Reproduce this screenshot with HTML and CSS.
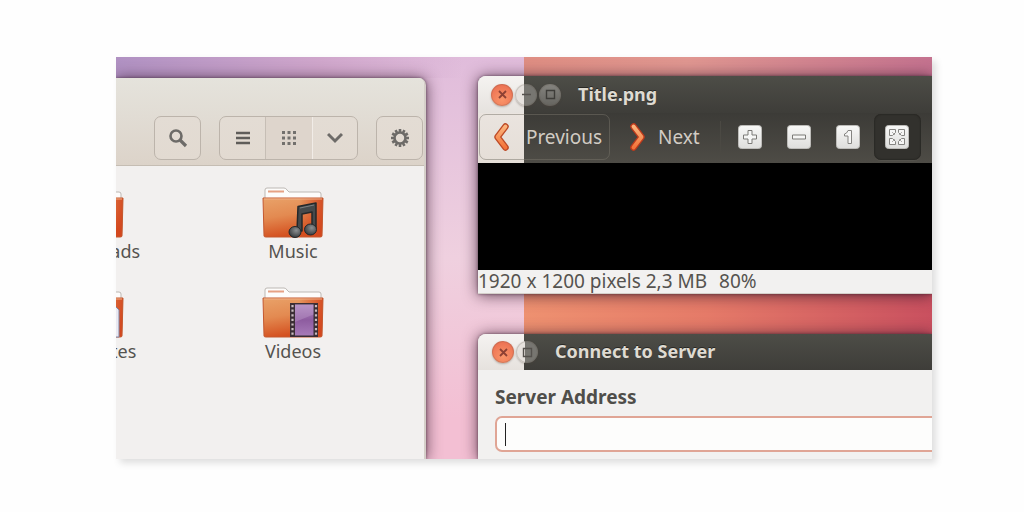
FILE: index.html
```html
<!DOCTYPE html>
<html lang="en">
<head>
<meta charset="utf-8">
<title>Desktop themes</title>
<link rel="stylesheet" href="styles.css">
</head>
<body>
<svg class="defs" width="0" height="0" aria-hidden="true">
  <defs>
    <linearGradient id="folder" x1="0" y1="0" x2=".25" y2="1">
      <stop offset="0" stop-color="#e9a269"/><stop offset=".5" stop-color="#e38a51"/><stop offset="1" stop-color="#d4501f"/>
    </linearGradient>
    <linearGradient id="edge" x1="0" x2="1">
      <stop offset=".6" stop-color="#d3451d" stop-opacity="0"/><stop offset="1" stop-color="#d3451d" stop-opacity=".9"/>
    </linearGradient>
    <linearGradient id="arrow" x1="0" y1="0" x2="0" y2="1">
      <stop offset="0" stop-color="#fbb47c"/><stop offset="1" stop-color="#f4743a"/>
    </linearGradient>
    <linearGradient id="tile" x1="0" y1="0" x2="0" y2="1">
      <stop offset="0" stop-color="#f8f8f7"/><stop offset="1" stop-color="#dededc"/>
    </linearGradient>
    <linearGradient id="film" x1="0" y1="0" x2="0" y2="1">
      <stop offset="0" stop-color="#b08ac0"/><stop offset=".5" stop-color="#8e5ca0"/><stop offset="1" stop-color="#a67ab8"/>
    </linearGradient>
    <radialGradient id="ball" cx=".6" cy=".35" r=".7">
      <stop offset="0" stop-color="#8d9092"/><stop offset="1" stop-color="#33373a"/>
    </radialGradient>
    <symbol id="folder-base" viewBox="0 0 62 52">
      <path d="M3 12V3q0-2 2-2h17q2 0 3 2l2 2h30q2 0 2 2v6z" fill="#fdfcfb" stroke="#bdb8b4"/>
      <path d="M6 4.500h16" stroke="#e6a184" stroke-width="2"/>
      <path d="M1 11h60l-1 38q0 1-2 1H4q-2 0-2-1z" fill="url(#folder)"/>
      <path d="M1 11h60l-1 38q0 1-2 1H4q-2 0-2-1z" fill="url(#edge)" stroke="#c4582f"/>
      <path d="M2 12h58" stroke="#efb08a"/>
    </symbol>
  </defs>
</svg>

<main class="desktop">
  <section class="window files" aria-label="Files">
    <header class="files-header">
      <button class="tool" aria-label="Search">
        <svg width="20" height="20" viewBox="0 0 20 20"><circle cx="8" cy="8" r="5.5" fill="none" stroke="#6d6b68" stroke-width="2.6"/><path d="M12 12l6 6" stroke="#6d6b68" stroke-width="3.2"/></svg>
      </button>
      <div class="views">
        <button aria-label="List view">
          <svg width="14" height="14" viewBox="0 0 14 14"><path d="M0 2h14M0 7h14M0 12h14" stroke="#5f5d5a" stroke-width="2.6"/></svg>
        </button>
        <button class="on" aria-label="Icon view">
          <svg width="14" height="14" viewBox="0 0 14 14" fill="#72706d"><path d="M0 0h3v3H0zM5.500 0h3v3h-3zM11 0h3v3h-3zM0 5.500h3v3H0zM5.500 5.500h3v3h-3zM11 5.500h3v3h-3zM0 11h3v3H0zM5.500 11h3v3h-3zM11 11h3v3h-3z"/></svg>
        </button>
        <button aria-label="View options">
          <svg width="16" height="12" viewBox="0 0 16 12"><path d="M1 2l7 7 7-7" fill="none" stroke="#6d6b68" stroke-width="3"/></svg>
        </button>
      </div>
      <button class="tool" aria-label="Settings">
        <svg width="20" height="20" viewBox="-10 -10 20 20" stroke="#6d6b68" fill="none"><circle r="5.500" stroke-width="2.600"/><path stroke-width="2.600" d="M0-9v3M0 9V6M9 0H6M-9 0h3M4.500-7.800L3-5.200M7.800-4.500L5.200-3M7.800 4.500L5.200 3M4.500 7.800L3 5.200M-4.500 7.800L-3 5.200M-7.800 4.500L-5.200 3M-7.800-4.500L-5.200-3M-4.500-7.800L-3-5.200"/></svg>
      </button>
    </header>
    <div class="icons">
      <figure class="item">
        <svg width="62" height="52" viewBox="0 0 62 52"><use href="#folder-base"/></svg>
        <figcaption>Downloads</figcaption>
      </figure>
      <figure class="item">
        <svg width="62" height="52" viewBox="0 0 62 52"><use href="#folder-base"/>
          <path d="M36 19.500L54 16v25h-4V25l-10 2v17h-5z" fill="#45494b" stroke="#25282a" stroke-width="1.500" stroke-linejoin="round"/>
          <path d="M38 21l14-3" stroke="#7d8082"/>
          <ellipse cx="33" cy="45" rx="6" ry="5.500" fill="url(#ball)" stroke="#25282a"/>
          <ellipse cx="48.500" cy="42.500" rx="6" ry="5.500" fill="url(#ball)" stroke="#25282a"/>
        </svg>
        <figcaption>Music</figcaption>
      </figure>
      <figure class="item">
        <svg width="62" height="52" viewBox="0 0 62 52"><use href="#folder-base"/><path d="M32 18h20l5 5v27H32z" fill="#e9e9f2" stroke="#8086a6"/></svg>
        <figcaption>Templates</figcaption>
      </figure>
      <figure class="item">
        <svg width="62" height="52" viewBox="0 0 62 52"><use href="#folder-base"/>
          <path d="M28 16h28v34H28z" fill="#3b2e35"/>
          <path d="M33 17.500h18.500v31H33z" fill="url(#film)"/>
          <path d="M33 17.500h18.500v10L33 35z" fill="#c6a6d0" opacity=".35"/>
          <path d="M30.500 18v32M54 18v32" stroke="#c9bcc0" stroke-width="2.200" stroke-dasharray="2.200 2.400"/>
        </svg>
        <figcaption>Videos</figcaption>
      </figure>
    </div>
  </section>

  <div class="stack">
    <section class="window viewer" aria-label="Title.png">
      <header class="titlebar">
        <div class="controls">
          <button class="ctl close" aria-label="Close"><svg width="9" height="9" viewBox="0 0 9 9"><path d="M1 1l7 7M8 1L1 8" stroke="#8e4033" stroke-width="1.800"/></svg></button>
          <button class="ctl split" aria-label="Minimize"><svg width="9" height="9" viewBox="0 0 9 9"><path d="M0 4.500h9" stroke="#55524e" stroke-width="1.500"/></svg></button>
          <button class="ctl dark" aria-label="Maximize"><svg width="11" height="11" viewBox="0 0 11 11"><path d="M1.500 1.500h8v8h-8z" fill="none" stroke="#3e3d39" stroke-width="1.400"/></svg></button>
        </div>
        <h1 class="title">Title.png</h1>
      </header>
      <div class="toolbar">
        <button class="nav raised"><svg width="17" height="28" viewBox="0 0 17 28"><path d="M12.500 3.500L4.500 14l8 10.500" fill="none" stroke="#bd4a26" stroke-width="6.500" stroke-linecap="round" stroke-linejoin="round"/><path d="M12.500 3.500L4.500 14l8 10.500" fill="none" stroke="url(#arrow)" stroke-width="3.800" stroke-linecap="round" stroke-linejoin="round"/></svg>Previous</button>
        <button class="nav next"><svg width="17" height="28" viewBox="0 0 17 28"><path d="M4.500 3.500l8 10.500-8 10.500" fill="none" stroke="#bd3a1c" stroke-width="6.500" stroke-linecap="round" stroke-linejoin="round"/><path d="M4.500 3.500l8 10.500-8 10.500" fill="none" stroke="url(#arrow)" stroke-width="3.800" stroke-linecap="round" stroke-linejoin="round"/></svg>Next</button>
        <span class="rule"></span>
        <button class="zoom" aria-label="Zoom in"><svg width="24" height="24" viewBox="0 0 24 24"><rect x=".5" y=".5" width="23" height="23" rx="3" fill="url(#tile)" stroke="#bdbcb9"/><path d="M10 5.500h4V10h4.500v4H14v4.500h-4V14H5.500v-4H10z" fill="#f6f6f5" stroke="#7b7a77"/></svg></button>
        <button class="zoom" aria-label="Zoom out"><svg width="24" height="24" viewBox="0 0 24 24"><rect x=".5" y=".5" width="23" height="23" rx="3" fill="url(#tile)" stroke="#bdbcb9"/><path d="M5.500 10h13v4h-13z" fill="#f6f6f5" stroke="#7b7a77"/></svg></button>
        <button class="zoom" aria-label="Normal size"><svg width="24" height="24" viewBox="0 0 24 24"><rect x=".5" y=".5" width="23" height="23" rx="3" fill="url(#tile)" stroke="#bdbcb9"/><path d="M12 5.500h3.500v13H12V11H8.500V9q2.500-.5 3.500-3.500z" fill="#f6f6f5" stroke="#858481"/></svg></button>
        <button class="zoom on" aria-label="Best fit"><svg width="24" height="24" viewBox="0 0 24 24"><rect x=".5" y=".5" width="23" height="23" rx="3" fill="url(#tile)" stroke="#bdbcb9"/><path d="M4.500 4.500h6v3l-3 3h-3zM19.500 4.500h-6v3l3 3h3zM4.500 19.500h6v-3l-3-3h-3zM19.500 19.500h-6v-3l3-3h3z" fill="#f6f6f5" stroke="#858481"/><path d="M7 7l3 3M17 7l-3 3M7 17l3-3M17 17l-3-3" stroke="#b0afac"/></svg></button>
      </div>
      <div class="canvas"></div>
      <footer class="status"><span>1920 x 1200 pixels 2,3 MB</span><span>80%</span></footer>
    </section>

    <section class="window connect" aria-label="Connect to Server">
      <header class="titlebar short">
        <div class="controls">
          <button class="ctl close" aria-label="Close"><svg width="9" height="9" viewBox="0 0 9 9"><path d="M1 1l7 7M8 1L1 8" stroke="#8e4033" stroke-width="1.800"/></svg></button>
          <button class="ctl split" aria-label="Maximize"><svg width="11" height="11" viewBox="0 0 11 11"><path d="M1.500 1.500h8v8h-8z" fill="none" stroke="#55524e" stroke-width="1.400"/></svg></button>
        </div>
        <h2 class="title">Connect to Server</h2>
      </header>
      <form class="form">
        <label for="address">Server Address</label>
        <input id="address" type="text">
      </form>
    </section>
  </div>
</main>
</body>
</html>
```
FILE: styles.css
```css
* { box-sizing: border-box; }

body {
  margin: 0;
  padding: 57px 92px 53px 116px;
  background: #fefefe;
  color: #55534f;
  font: 18px/24px "Noto Sans", "Open Sans", sans-serif;
}

.defs { display: block; height: 0; }

button {
  display: flex;
  align-items: center;
  justify-content: center;
  margin: 0;
  padding: 0;
  border: 0;
  background: none;
  color: inherit;
  font: inherit;
}

svg { display: block; flex: none; }

.desktop {
  display: grid;
  grid-template-columns: 310px minmax(0, 1fr);
  column-gap: 52px;
  height: 402px;
  overflow: hidden;
  background:
    linear-gradient(90deg, #df8e83, #e09791 40%, #c4728f) 100% 0 / 50% 60px no-repeat,
    linear-gradient(90deg, #ee9170, #e57a68 45%, #c9505f) 100% 100% / 50% 100% no-repeat,
    linear-gradient(90deg, #b091c2, #cfa6cb 50%, rgba(223, 187, 219, 0) 85%) 0 0 / 50% 21px no-repeat,
    linear-gradient(#e0bcdb, #efd0df 50%, #f3bfd3 90%);
  box-shadow: 4px 4px 7px rgba(0, 0, 0, .13);
}

.window {
  box-shadow: 0 0 3px rgba(50, 25, 45, .6), 0 1px 15px rgba(50, 20, 40, .75);
}

.files {
  margin-top: 21px;
  overflow: hidden;
  border-right: 2px solid #d5cfc9;
  border-radius: 0 7px 0 0;
  background: #f2f0ef;
}

.files-header {
  display: flex;
  justify-content: flex-end;
  align-items: flex-end;
  gap: 18px;
  height: 88px;
  padding: 0 1px 5px 0;
  border-bottom: 1px solid #c5bdb3;
  background: linear-gradient(#e5e3dc, #e1dcd4 45%, #dcd3c9);
}

.tool,
.views {
  height: 44px;
  border: 1px solid #bcb4ab;
  border-radius: 7px;
  background: linear-gradient(#e3dcd4, #e2dad1);
}

.tool { width: 47px; }

.views {
  display: grid;
  grid-template-columns: 45px 48px 44px;
  overflow: hidden;
}

.views .on {
  border-right: 1px solid #f1ece7;
  border-left: 1px solid #c6beb5;
  background: #ded5cc;
}

.icons {
  display: grid;
  grid-template-columns: 200px 200px;
  grid-auto-rows: 100px;
  margin: 21px 0 0 -123px;
}

.item {
  display: flex;
  flex-direction: column;
  align-items: center;
  margin: 0;
}

.stack {
  display: flex;
  flex-direction: column;
  gap: 40px;
  padding-top: 19px;
}

.viewer,
.connect {
  border-radius: 8px 0 0 0;
  background: #f2f1f0;
}

.connect { flex: 1; }

.titlebar {
  display: flex;
  align-items: center;
  gap: 17px;
  height: 37px;
  padding-left: 13px;
  border-radius: 8px 0 0 0;
  background:
    linear-gradient(#f5f3f1, #e6e2de) 0 0 / 46px 100% no-repeat,
    linear-gradient(#4d4d47, #3e3d39);
}

.titlebar.short {
  height: 36px;
  padding-left: 14px;
}

.controls { display: flex; gap: 2px; }

.ctl {
  width: 22px;
  height: 22px;
  border-radius: 50%;
  box-shadow: inset 0 0 0 1px rgba(90, 80, 70, .2), 0 1px 2px rgba(80, 70, 60, .35);
}

.close { background: radial-gradient(circle at 50% 70%, #fa9569, #e8664c); }
.dark { background: linear-gradient(#85847f, #65645f); }
.split { background: linear-gradient(90deg, #e6e2de 9px, #777671 9px); }

.title {
  margin: 0;
  padding-bottom: 2px;
  color: #dfdbd2;
  font-size: 18px;
  line-height: 24px;
  font-weight: 700;
  text-shadow: 0 -1px #292824;
}

.toolbar {
  display: flex;
  align-items: center;
  height: 50px;
  padding: 0 0 2px 1px;
  background:
    linear-gradient(#eae4df, #e5ded7) 0 0 / 46px 100% no-repeat,
    linear-gradient(#3c3b37, #4e4c46);
  color: #d2ccc4;
  font-size: 19px;
}

.nav {
  gap: 16px;
  height: 46px;
  padding: 0 7px 0 14px;
}

.nav.next { gap: 12px; }

.raised {
  width: 131px;
  margin-right: 5px;
  padding: 0 6px 0 12px;
  border: 1px solid rgba(120, 115, 106, .5);
  border-radius: 7px;
}

.rule {
  width: 1px;
  height: 32px;
  margin: 0 6px 0 13px;
  background: #4b4943;
}

.zoom {
  width: 47px;
  height: 46px;
  margin-right: 2px;
  border-radius: 7px;
}

.zoom.on {
  background: #32312d;
  box-shadow: inset 0 0 2px #191815, 0 1px #55534d;
}

.canvas { height: 107px; background: #000; }

.status {
  display: flex;
  gap: 12px;
  height: 24px;
  border-bottom: 1px solid #d5d0ca;
  font-size: 19px;
  line-height: 22px;
}

.form {
  display: flex;
  flex-direction: column;
  gap: 7px;
  margin-right: -10px;
  padding: 15px 0 0 17px;
}

.form label {
  color: #4f4e4a;
  font-size: 19px;
  font-weight: 700;
}

/* The text cursor is a one-pixel stripe in the background. */
.form input {
  height: 36px;
  padding: 0 12px;
  border: 2px solid #e0a595;
  border-radius: 7px;
  background: linear-gradient(#222, #222) 8px 5px / 1px 23px no-repeat, #fdfdfc;
  color: #333;
  font: inherit;
}
```
